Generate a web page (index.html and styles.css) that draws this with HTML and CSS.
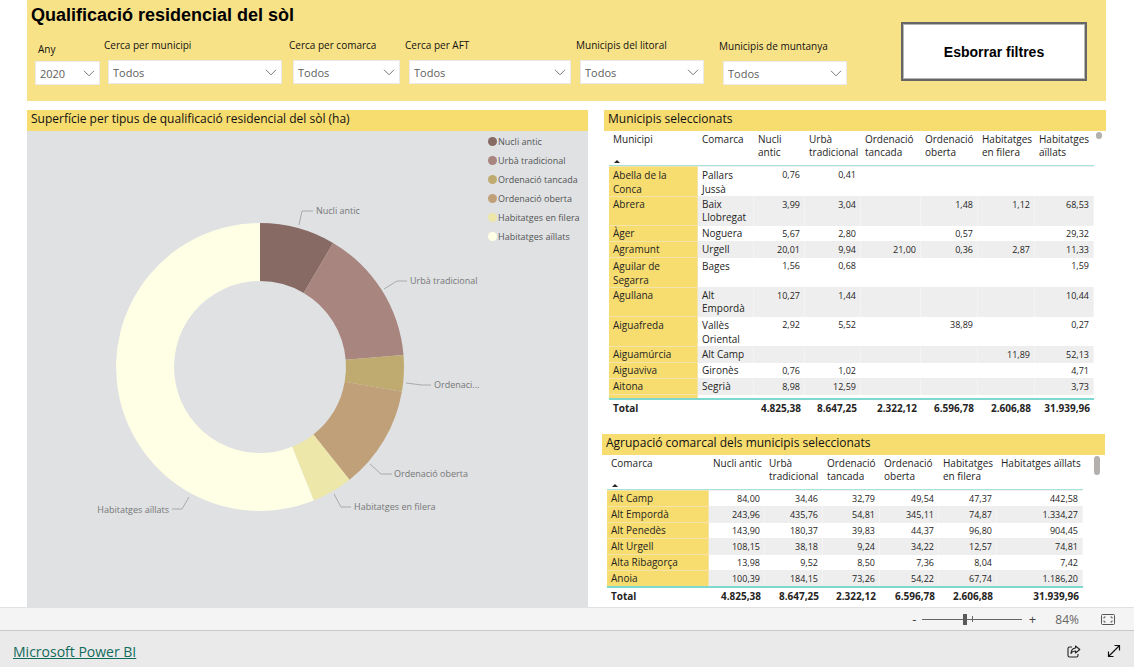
FILE: index.html
```html
<!DOCTYPE html>
<html lang="ca">
<head>
<meta charset="utf-8">
<title>Qualificació residencial del sòl</title>
<link rel="stylesheet" href="styles.css">
</head>
<body>
<main class="report">
  <header class="banner">
    <h1 class="banner-title">Qualificació residencial del sòl</h1>
    <div class="toolbar">
      <div class="filter filter-year">
        <label for="f-any">Any</label>
        <div class="select-box"><select id="f-any"><option>2020</option></select><svg class="chevron" viewBox="0 0 12 7"><path d="M1 .8 6 5.800 11 .8"/></svg></div>
      </div>
      <div class="filter filter-municipi">
        <label for="f-mun">Cerca per municipi</label>
        <div class="select-box"><select id="f-mun"><option>Todos</option></select><svg class="chevron" viewBox="0 0 12 7"><path d="M1 .8 6 5.800 11 .8"/></svg></div>
      </div>
      <div class="filter filter-comarca">
        <label for="f-com">Cerca per comarca</label>
        <div class="select-box"><select id="f-com"><option>Todos</option></select><svg class="chevron" viewBox="0 0 12 7"><path d="M1 .8 6 5.800 11 .8"/></svg></div>
      </div>
      <div class="filter filter-aft">
        <label for="f-aft">Cerca per AFT</label>
        <div class="select-box"><select id="f-aft"><option>Todos</option></select><svg class="chevron" viewBox="0 0 12 7"><path d="M1 .8 6 5.800 11 .8"/></svg></div>
      </div>
      <div class="filter filter-litoral">
        <label for="f-lit">Municipis del litoral</label>
        <div class="select-box"><select id="f-lit"><option>Todos</option></select><svg class="chevron" viewBox="0 0 12 7"><path d="M1 .8 6 5.800 11 .8"/></svg></div>
      </div>
      <div class="filter filter-muntanya">
        <label for="f-mnt">Municipis de muntanya</label>
        <div class="select-box"><select id="f-mnt"><option>Todos</option></select><svg class="chevron" viewBox="0 0 12 7"><path d="M1 .8 6 5.800 11 .8"/></svg></div>
      </div>
    </div>
    <button class="clear-button" type="button">Esborrar filtres</button>
  </header>

  <div class="panels">
    <section class="panel chart-panel">
      <h2 class="panel-title">Superfície per tipus de qualificació residencial del sòl (ha)</h2>
      <div class="plot">
        <svg class="donut" viewBox="0 0 561 476" preserveAspectRatio="xMidYMin meet" role="img" aria-label="Superfície per tipus">
          <path fill="#876a64" d="M233 92A144 144 0 0 1 306.1 111.900L276.700 161.900A86 86 0 0 0 233 150Z"/>
          <path fill="#a8857e" d="M306.100 111.900A144 144 0 0 1 376.500 223.900L318.700 228.800A86 86 0 0 0 276.700 161.900Z"/>
          <path fill="#bfab70" d="M376.500 223.900A144 144 0 0 1 374.900 260.700L317.700 250.700A86 86 0 0 0 318.700 228.800Z"/>
          <path fill="#c0a078" d="M374.900 260.700A144 144 0 0 1 322.500 348.800L286.400 303.400A86 86 0 0 0 317.700 250.700Z"/>
          <path fill="#ede7aa" d="M322.500 348.800A144 144 0 0 1 286.800 369.600L265.100 315.800A86 86 0 0 0 286.400 303.400Z"/>
          <path fill="#ffffe6" d="M286.800 369.600A144 144 0 1 1 233 92L233 150A86 86 0 1 0 265.100 315.800Z"/>
          <g class="leaders">
            <path d="M272 94 275 80H286"/>
            <path d="M357 158 370 150H380"/>
            <path d="M379 252 395 254H404"/>
            <path d="M343 333 354 343H365"/>
            <path d="M307 363 314 376H324"/>
            <path d="M162 366 155 378H145"/>
          </g>
          <g class="slice-labels">
            <text x="289" y="83">Nucli antic</text>
            <text x="383" y="153">Urbà tradicional</text>
            <text x="407" y="257">Ordenaci...</text>
            <text x="367" y="346">Ordenació oberta</text>
            <text x="327" y="379">Habitatges en filera</text>
            <text x="142" y="382" text-anchor="end">Habitatges aïllats</text>
          </g>
        </svg>
        <ul class="legend">
          <li><span class="dot dot-nucli"></span>Nucli antic</li>
          <li><span class="dot dot-urba"></span>Urbà tradicional</li>
          <li><span class="dot dot-tancada"></span>Ordenació tancada</li>
          <li><span class="dot dot-oberta"></span>Ordenació oberta</li>
          <li><span class="dot dot-filera"></span>Habitatges en filera</li>
          <li><span class="dot dot-aillats"></span>Habitatges aïllats</li>
        </ul>
      </div>
    </section>

    <div class="tables">
      <section class="panel municipis">
        <h2 class="panel-title">Municipis seleccionats</h2>
        <div class="table-area">
          <table class="data">
            <colgroup><col class="m1"><col class="m2"><col class="m3"><col class="m4"><col class="m5"><col class="m6"><col class="m7"><col class="m8"></colgroup>
            <thead><tr><th class="sorted">Municipi</th><th>Comarca</th><th>Nucli<br>antic</th><th>Urbà<br>tradicional</th><th>Ordenació<br>tancada</th><th>Ordenació<br>oberta</th><th>Habitatges<br>en filera</th><th>Habitatges<br>aïllats</th></tr></thead>
            <tbody>
              <tr class="loose"><th>Abella de la<br>Conca</th><td class="name">Pallars<br>Jussà</td><td>0,76</td><td>0,41</td><td></td><td></td><td></td><td></td></tr>
              <tr><th>Abrera</th><td class="name">Baix<br>Llobregat</td><td>3,99</td><td>3,04</td><td></td><td>1,48</td><td>1,12</td><td>68,53</td></tr>
              <tr><th>Àger</th><td class="name">Noguera</td><td>5,67</td><td>2,80</td><td></td><td>0,57</td><td></td><td>29,32</td></tr>
              <tr><th>Agramunt</th><td class="name">Urgell</td><td>20,01</td><td>9,94</td><td>21,00</td><td>0,36</td><td>2,87</td><td>11,33</td></tr>
              <tr class="loose"><th>Aguilar de<br>Segarra</th><td class="name">Bages</td><td>1,56</td><td>0,68</td><td></td><td></td><td></td><td>1,59</td></tr>
              <tr><th>Agullana</th><td class="name">Alt<br>Empordà</td><td>10,27</td><td>1,44</td><td></td><td></td><td></td><td>10,44</td></tr>
              <tr class="loose"><th>Aiguafreda</th><td class="name">Vallès<br>Oriental</td><td>2,92</td><td>5,52</td><td></td><td>38,89</td><td></td><td>0,27</td></tr>
              <tr><th>Aiguamúrcia</th><td class="name">Alt Camp</td><td></td><td></td><td></td><td></td><td>11,89</td><td>52,13</td></tr>
              <tr><th>Aiguaviva</th><td class="name">Gironès</td><td>0,76</td><td>1,02</td><td></td><td></td><td></td><td>4,71</td></tr>
              <tr><th>Aitona</th><td class="name">Segrià</td><td>8,98</td><td>12,59</td><td></td><td></td><td></td><td>3,73</td></tr>
              <tr class="clipped"><th></th><td></td><td></td><td></td><td></td><td></td><td></td><td></td></tr>
            </tbody>
            <tfoot><tr><th>Total</th><td></td><td>4.825,38</td><td>8.647,25</td><td>2.322,12</td><td>6.596,78</td><td>2.606,88</td><td>31.939,96</td></tr></tfoot>
          </table>
          <span class="scroll-thumb thumb-short"></span>
        </div>
      </section>

      <section class="panel comarques">
        <h2 class="panel-title">Agrupació comarcal dels municipis seleccionats</h2>
        <div class="table-area">
          <table class="data">
            <colgroup><col class="c1"><col class="c2"><col class="c3"><col class="c4"><col class="c5"><col class="c6"><col class="c7"></colgroup>
            <thead><tr><th class="sorted">Comarca</th><th>Nucli antic</th><th>Urbà<br>tradicional</th><th>Ordenació<br>tancada</th><th>Ordenació<br>oberta</th><th>Habitatges<br>en filera</th><th>Habitatges aïllats</th></tr></thead>
            <tbody>
              <tr><th>Alt Camp</th><td>84,00</td><td>34,46</td><td>32,79</td><td>49,54</td><td>47,37</td><td>442,58</td></tr>
              <tr><th>Alt Empordà</th><td>243,96</td><td>435,76</td><td>54,81</td><td>345,11</td><td>74,87</td><td>1.334,27</td></tr>
              <tr><th>Alt Penedès</th><td>143,90</td><td>180,37</td><td>39,83</td><td>44,37</td><td>96,80</td><td>904,45</td></tr>
              <tr><th>Alt Urgell</th><td>108,15</td><td>38,18</td><td>9,24</td><td>34,22</td><td>12,57</td><td>74,81</td></tr>
              <tr><th>Alta Ribagorça</th><td>13,98</td><td>9,52</td><td>8,50</td><td>7,36</td><td>8,04</td><td>7,42</td></tr>
              <tr><th>Anoia</th><td>100,39</td><td>184,15</td><td>73,26</td><td>54,22</td><td>67,74</td><td>1.186,20</td></tr>
            </tbody>
            <tfoot><tr><th>Total</th><td>4.825,38</td><td>8.647,25</td><td>2.322,12</td><td>6.596,78</td><td>2.606,88</td><td>31.939,96</td></tr></tfoot>
          </table>
          <span class="scroll-thumb thumb-long"></span>
        </div>
      </section>
    </div>
  </div>
</main>

<div class="zoom-bar">
  <button class="zoom-step" type="button" aria-label="Redueix">-</button>
  <input class="zoom-slider" type="range" min="0" max="100" value="42" aria-label="Zoom">
  <button class="zoom-step" type="button" aria-label="Amplia">+</button>
  <span class="zoom-value">84%</span>
  <button class="icon-button" type="button" aria-label="Ajusta a la pàgina">
    <svg width="14" height="11" viewBox="0 0 14 11" fill="none" stroke="#555"><rect x=".5" y=".5" width="13" height="10" rx="1"/><path d="M3 4.500V3H4.500M9.500 3H11V4.500M11 6.500V8H9.500M4.500 8H3V6.500"/></svg>
  </button>
</div>
<footer class="footer">
  <a class="brand" href="#">Microsoft Power BI</a>
  <div class="footer-actions">
    <button class="icon-button" type="button" aria-label="Comparteix">
      <svg width="14" height="13" viewBox="0 0 14 13" fill="none" stroke="#222" stroke-width="1.100" stroke-linejoin="round"><path d="M5 2H2.500Q1 2 1 3.500V10.500Q1 12 2.500 12H9.500Q11 12 11 10.500V9"/><path d="M8.500 1 12.800 4.500 8.500 8V6Q5.500 5.800 4 8.500 4.200 3.500 8.500 3Z"/></svg>
    </button>
    <button class="icon-button" type="button" aria-label="Pantalla completa">
      <svg width="14" height="14" viewBox="0 0 14 14" fill="none" stroke="#111" stroke-width="1.200"><path d="M1.500 12.500 12.500 1.500M7.500 1.500H12.500V6.500M1.500 7.500V12.500H6.500"/></svg>
    </button>
  </div>
</footer>
</body>
</html>
```

FILE: styles.css
```css
* { box-sizing: border-box; }

body {
  margin: 0;
  min-height: 100vh;
  display: flex;
  flex-direction: column;
  background: #fff;
  color: #252423;
  font-family: "Open Sans", "Noto Sans", sans-serif;
  font-size: 9px;
}

h1, h2, ul { margin: 0; padding: 0; }
button, select { font: inherit; }

.report {
  flex: 1;
  display: flex;
  flex-direction: column;
  gap: 9px;
  padding: 0 28px 0 27px;
}

.banner {
  display: grid;
  grid-template-columns: 812fr 186fr;
  grid-template-rows: 38px 1fr;
  column-gap: 54px;
  height: 101px;
  padding: 0 19px 0 8px;
  background: #f8e288;
}

.banner-title {
  margin-left: -4px;
  padding-top: 4px;
  font: bold 18px/22px "Liberation Sans", Arial, sans-serif;
  color: #000;
}

.toolbar {
  grid-column: 1;
  display: flex;
  align-items: flex-start;
}

.filter { min-width: 0; color: #111; font-size: 10px; }
.filter label { display: block; height: 22px; line-height: 14px; white-space: nowrap; }
.filter .select-box { margin-left: 4px; }
.filter-year { flex: 65 1 0; padding-top: 4px; }
.filter-year label { height: 19px; padding-left: 3px; }
.filter-year .select-box { margin-left: 0; }
.filter-municipi { flex: 178 1 0; margin-left: 4px; }
.filter-comarca { flex: 111 1 0; margin-left: 7px; }
.filter-aft { flex: 166 1 0; margin-left: 5px; }
.filter-litoral { flex: 128 1 0; margin-left: 5px; }
.filter-muntanya { flex: 128 1 0; margin-left: 15px; padding-top: 1px; }

.select-box { position: relative; }
.select-box select {
  display: block;
  width: 100%;
  height: 24px;
  padding: 1px 20px 0 4px;
  border: 1px solid #eaeaea;
  border-radius: 0;
  background: #fff;
  color: #605e5c;
  font-size: 11px;
  appearance: none;
}
.chevron {
  position: absolute;
  top: 9px;
  right: 5px;
  width: 12px;
  height: 7px;
  fill: none;
  stroke: #777;
  pointer-events: none;
}

.clear-button {
  grid-column: 2;
  grid-row: 1 / 3;
  height: 59px;
  margin-top: 22px;
  border: 2px solid #666;
  background: #fff;
  box-shadow: inset 0 0 0 1px #b5b5b5;
  color: #000;
  font: bold 14px "Liberation Sans", Arial, sans-serif;
}

.panels {
  flex: 1;
  display: grid;
  grid-template-columns: 561fr 504fr;
  column-gap: 14px;
}

.panel-title {
  height: 21px;
  padding-left: 4px;
  background: #f7dc6f;
  color: #111;
  font-size: 12px;
  font-weight: 400;
  line-height: 18px;
  white-space: nowrap;
}

.chart-panel { display: flex; flex-direction: column; background: #dfe1e3; }
.plot { flex: 1; display: grid; }
.donut { grid-area: 1 / 1; width: 100%; height: 100%; }
.leaders { fill: none; stroke: #aaa; }
.slice-labels { fill: #777; font-size: 9px; }

.legend {
  grid-area: 1 / 1;
  justify-self: end;
  width: 100px;
  padding-top: 1px;
  list-style: none;
  color: #555;
  font-size: 9px;
  white-space: nowrap;
}
.legend li { display: flex; align-items: center; gap: 1px; height: 19px; }
.dot { width: 9px; height: 9px; border-radius: 50%; }
.dot-nucli { background: #876a64; }
.dot-urba { background: #a8857e; }
.dot-tancada { background: #bfab70; }
.dot-oberta { background: #c0a078; }
.dot-filera { background: #ede7aa; }
.dot-aillats { background: #ffffe6; }

.tables { display: flex; flex-direction: column; }
.municipis { margin-left: 2px; height: 324px; }
.comarques { margin-right: 1px; }
.table-area { display: flex; align-items: flex-start; padding: 0 5px; }
.municipis .table-area { padding-right: 4px; }

.data {
  flex: 1;
  table-layout: fixed;
  width: 100%;
  border-collapse: separate;
  border-spacing: 0;
  line-height: 13px;
}
.m1 { width: 89px; } .m2 { width: 56px; } .m3 { width: 51px; } .m4 { width: 56px; }
.m5 { width: 60px; } .m6 { width: 57px; } .m7 { width: 57px; }
.c1 { width: 102px; } .c2 { width: 56px; } .c3 { width: 58px; } .c4 { width: 57px; }
.c5 { width: 59px; } .c6 { width: 58px; }

.data th, .data td { padding: 0 4px; vertical-align: top; font-weight: 400; }
.data th, .data .name { font-size: 10px; text-align: left; }
.data td { text-align: right; }
.data thead th {
  height: 35px;
  padding: 2px 0 0 4px;
  border-bottom: 1px solid #a5e3dc;
  white-space: nowrap;
}
.data .sorted::after {
  content: "";
  display: block;
  width: 0;
  margin: 14px 0 0 1px;
  border: 3px solid transparent;
  border-top: 0;
  border-bottom-color: #252423;
}
.data tbody th, .data tbody td {
  height: 16px;
  padding-top: 1px;
  padding-bottom: 1px;
  border-top: 1px solid #eee;
  border-right: 1px solid #f4f4f4;
}
.data tbody th { background: #f7dc6f; border-color: #f3e5a9; }
.data tbody tr:nth-child(even) td { background: #eee; }
.data tbody tr:nth-child(odd) td { border-right-color: #fff; }
.data tbody .loose { line-height: 14px; }
.data tbody .loose th, .data tbody .loose td { padding-bottom: 0; }
.data tbody .clipped th, .data tbody .clipped td { height: 4px; padding: 0; }
.data tfoot th, .data tfoot td {
  height: 20px;
  padding-top: 2px;
  border-top: 2px solid #7dd8cf;
  font-size: 10px;
  font-weight: 700;
}

.scroll-thumb { flex: none; width: 6px; border-radius: 3px; background: #b3b0ad; }
.thumb-short { height: 7px; margin: 1px 0 0 2px; }
.thumb-long { height: 19px; margin: 1px 0 0 11px; }

.zoom-bar {
  display: flex;
  align-items: center;
  justify-content: flex-end;
  height: 24px;
  padding-right: 19px;
  border-top: 1px solid #e1e1e1;
  border-bottom: 1px solid #c8c8c8;
  background: #f4f4f4;
  color: #555;
}
.zoom-step { width: 10px; padding: 0; border: 0; background: none; color: #444; font-size: 13px; line-height: 16px; }
.zoom-slider {
  width: 102px;
  height: 12px;
  margin: 0 4px 0 2px;
  appearance: none;
  background:
    linear-gradient(#666, #666) 51px 3px / 1px 6px no-repeat,
    linear-gradient(#666, #666) 1px 6px / 100px 1px no-repeat;
}
.zoom-slider::-webkit-slider-thumb { appearance: none; width: 4px; height: 11px; background: #5a5a5a; }
.zoom-value { margin: 0 22px 0 18px; color: #666; font-size: 12px; }
.icon-button { display: flex; padding: 0; border: 0; background: none; }

.footer {
  display: flex;
  align-items: center;
  justify-content: space-between;
  height: 36px;
  padding: 4px 13px 0;
  background: #eaeaea;
}
.brand { color: #116b5b; font-size: 14px; }
.footer-actions { display: flex; align-items: center; gap: 26px; }
```
